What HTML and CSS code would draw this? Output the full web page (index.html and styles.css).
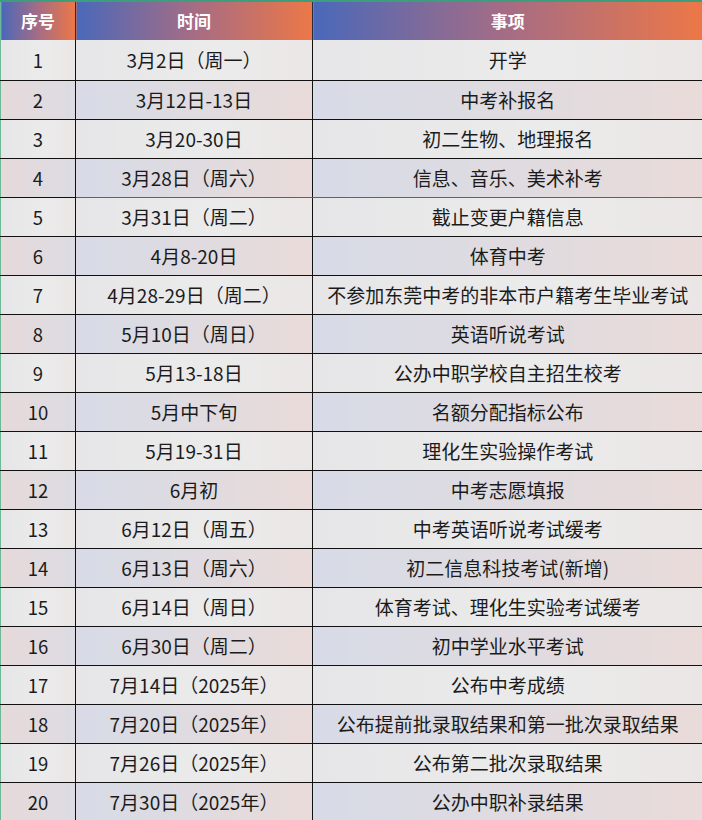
FILE: index.html
```html
<!DOCTYPE html>
<html lang="zh-CN">
<head>
<meta charset="utf-8">
<title>中考日程</title>
<link rel="stylesheet" href="styles.css">
</head>
<body>
<table class="sched">
  <colgroup>
    <col class="c-no">
    <col class="c-time">
    <col class="c-item">
  </colgroup>
  <thead>
    <tr><th>序号</th><th>时间</th><th>事项</th></tr>
  </thead>
  <tbody>
    <tr class="first"><td>1</td><td>3月2日（周一）</td><td>开学</td></tr>
    <tr><td>2</td><td>3月12日-13日</td><td>中考补报名</td></tr>
    <tr><td>3</td><td>3月20-30日</td><td>初二生物、地理报名</td></tr>
    <tr class="red-bottom"><td>4</td><td>3月28日（周六）</td><td>信息、音乐、美术补考</td></tr>
    <tr><td>5</td><td>3月31日（周二）</td><td>截止变更户籍信息</td></tr>
    <tr><td>6</td><td>4月8-20日</td><td>体育中考</td></tr>
    <tr><td>7</td><td>4月28-29日（周二）</td><td>不参加东莞中考的非本市户籍考生毕业考试</td></tr>
    <tr><td>8</td><td>5月10日（周日）</td><td>英语听说考试</td></tr>
    <tr><td>9</td><td>5月13-18日</td><td>公办中职学校自主招生校考</td></tr>
    <tr><td>10</td><td>5月中下旬</td><td>名额分配指标公布</td></tr>
    <tr><td>11</td><td>5月19-31日</td><td>理化生实验操作考试</td></tr>
    <tr><td>12</td><td>6月初</td><td>中考志愿填报</td></tr>
    <tr><td>13</td><td>6月12日（周五）</td><td>中考英语听说考试缓考</td></tr>
    <tr><td>14</td><td>6月13日（周六）</td><td>初二信息科技考试(新增)</td></tr>
    <tr><td>15</td><td>6月14日（周日）</td><td>体育考试、理化生实验考试缓考</td></tr>
    <tr><td>16</td><td>6月30日（周二）</td><td>初中学业水平考试</td></tr>
    <tr><td>17</td><td>7月14日（2025年）</td><td>公布中考成绩</td></tr>
    <tr><td>18</td><td>7月20日（2025年）</td><td>公布提前批录取结果和第一批次录取结果</td></tr>
    <tr><td>19</td><td>7月26日（2025年）</td><td>公布第二批次录取结果</td></tr>
    <tr><td>20</td><td>7月30日（2025年）</td><td>公办中职补录结果</td></tr>
  </tbody>
</table>
</body>
</html>
```
FILE: styles.css
```css
html, body {
  margin: 0;
  padding: 0;
  background: #e9e9e9;
}

body {
  font-family: "Noto Sans CJK SC", "Noto Sans", sans-serif;
  color: #1b1b1b;
  overflow: hidden;
}

.sched {
  width: 702px;
  border-collapse: collapse;
  table-layout: fixed;
  border-top: 2px solid #3c9e7c;
  border-left: 1px solid #6db896;
}

.c-no { width: 75px; }
.c-time { width: 237px; }
.c-item { width: 390px; }

.sched th {
  height: 38px;
  padding: 0;
  font-size: 17px;
  font-weight: 700;
  color: #ffffff;
  text-align: center;
  background: linear-gradient(to right, #4a68b9 0%, #a66c84 50%, #ec7747 100%);
  border-left: 1px solid #2a2a3a;
  line-height: 38px;
}

.sched th:first-child {
  border-left: none;
}

.sched td {
  height: 38px;
  padding: 0;
  font-size: 19px;
  line-height: 38px;
  text-align: center;
  white-space: nowrap;
  border-bottom: 1px solid #111111;
  border-left: 1px solid #111111;
  background: #e9e9e9;
}

.sched tr.first td {
  height: 40px;
  line-height: 40px;
}

.sched td:first-child {
  border-left: none;
  font-size: 18.5px;
}

.sched tbody tr:nth-child(even) td {
  background: linear-gradient(to right, #d7dbe7 0%, #dfdbe0 50%, #e9dbd9 100%);
}

.sched tbody tr:nth-child(even) td:first-child {
  background: linear-gradient(to right, #e6dada 0%, #dcdbe3 100%);
}

.sched tbody tr:nth-child(odd) td {
  background: linear-gradient(to right, #e6e6e8 0%, #ebebeb 60%, #eae6e5 100%);
}

.sched tbody tr.red-bottom td {
  border-bottom-color: #c03a3a;
}

.sched tbody tr.red-bottom td:first-child {
  border-bottom-color: #111111;
}
```
